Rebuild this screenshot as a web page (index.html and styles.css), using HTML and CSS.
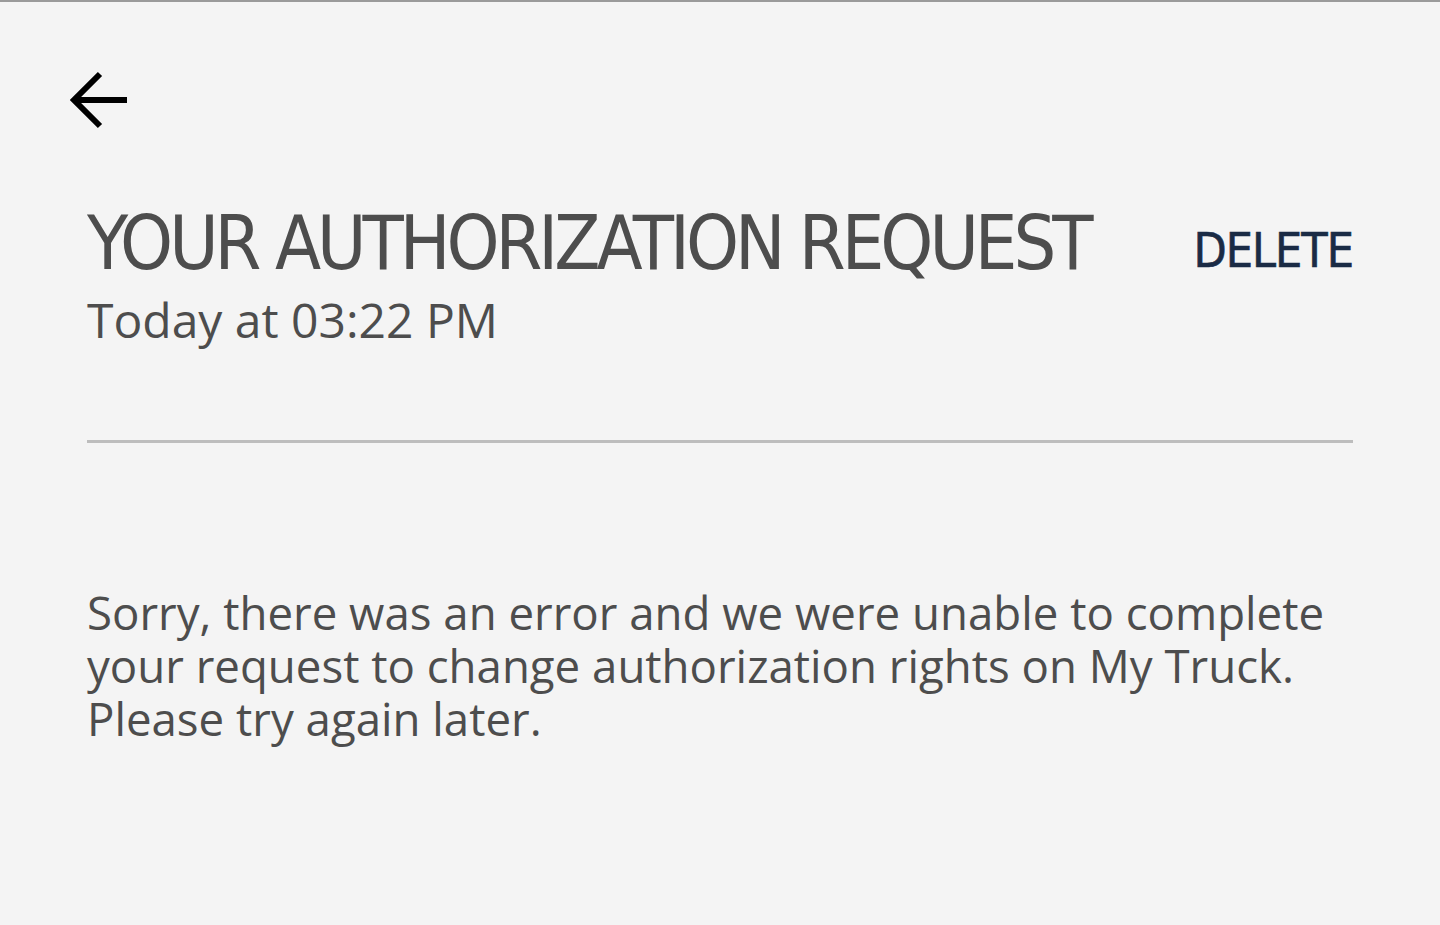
FILE: index.html
```html
<!DOCTYPE html>
<html lang="en">
<head>
  <meta charset="UTF-8" />
  <title>Your Authorization Request</title>
  <link rel="stylesheet" href="styles.css">
</head>
<body>
  <div class="page">
    <button class="back-button" aria-label="Back">
      <svg width="60" height="58" viewBox="0 0 60 58">
        <path d="M31 3 L5 29 L31 55 M5 29 L58 29" fill="none" stroke="#000" stroke-width="6"/>
      </svg>
    </button>

    <div class="header">
      <div class="titles">
        <h1 class="title">YOUR AUTHORIZATION REQUEST</h1>
        <div class="date">Today at 03:22 PM</div>
      </div>
      <button class="delete-button">DELETE</button>
    </div>

    <hr class="divider">

    <p class="message">Sorry, there was an error and we were unable to complete your request to change authorization rights on My Truck. Please try again later.</p>
  </div>
</body>
</html>
```

FILE: styles.css
```css
body {
  margin: 0;
  background-color: #f4f4f4;
  border-top: 2px solid #9a9a9a;
  font-family: "Open Sans", sans-serif;
  color: #4d4d4d;
  height: 923px;
  overflow: hidden;
}

.page {
  padding: 0 87px 0 87px;
}

.back-button {
  display: block;
  margin: 69px 0 0 -18px;
  padding: 0;
  border: none;
  background: none;
  cursor: pointer;
}

.back-button svg {
  display: block;
}

.header {
  display: flex;
  justify-content: space-between;
  align-items: flex-start;
  margin-top: 69px;
}

.title {
  margin: 0;
  white-space: nowrap;
  font-family: "DejaVu Sans Condensed", "Liberation Sans Narrow", sans-serif;
  font-weight: normal;
  font-size: 75px;
  line-height: 90px;
  letter-spacing: -4px;
  color: #4d4d4d;
}

.date {
  margin-top: 2px;
  font-size: 48px;
  line-height: 60px;
}

.delete-button {
  margin-top: 22px;
  padding: 0;
  border: none;
  background: none;
  font-family: "DejaVu Sans Condensed", "Liberation Sans Narrow", sans-serif;
  font-size: 48px;
  line-height: 60px;
  letter-spacing: -1px;
  color: #1a2b45;
  -webkit-text-stroke: 0.6px #1a2b45;
  cursor: pointer;
}

.divider {
  margin: 90px 0 0 0;
  border: none;
  height: 3px;
  background-color: #bdbdbd;
}

.message {
  margin: 143px 0 0 0;
  font-size: 45.6px;
  line-height: 53px;
  color: #4d4d4d;
}
```
